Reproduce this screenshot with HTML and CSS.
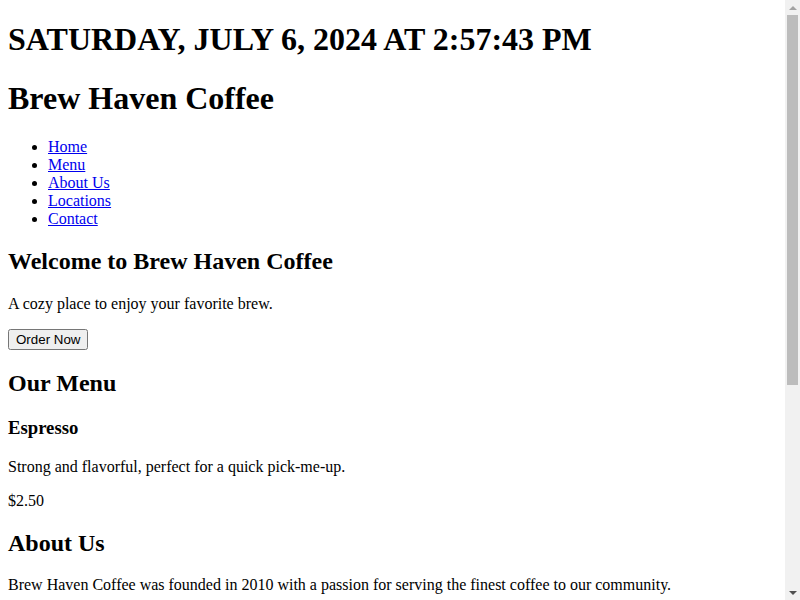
FILE: index.html
```html
<!DOCTYPE html>
<html lang="en">
<head>
<meta charset="utf-8">
<title>Brew Haven Coffee</title>
<link rel="stylesheet" href="styles.css">
</head>
<body class="page">
<header class="site-header">
  <h1 class="clock">Saturday, July 6, 2024 at 2:57:43 PM</h1>
  <h1 class="brand">Brew Haven Coffee</h1>
  <nav class="nav">
    <ul class="nav-list">
      <li><a href="#home">Home</a></li>
      <li><a href="#menu">Menu</a></li>
      <li><a href="#about">About Us</a></li>
      <li><a href="#locations">Locations</a></li>
      <li><a href="#contact">Contact</a></li>
    </ul>
  </nav>
</header>
<main class="main">
  <section class="hero" id="home">
    <h2>Welcome to Brew Haven Coffee</h2>
    <p>A cozy place to enjoy your favorite brew.</p>
    <button class="btn" type="button">Order Now</button>
  </section>
  <section class="menu" id="menu">
    <h2>Our Menu</h2>
    <div class="item">
      <h3>Espresso</h3>
      <p>Strong and flavorful, perfect for a quick pick-me-up.</p>
      <p>$2.50</p>
    </div>
  </section>
  <section class="about" id="about">
    <h2>About Us</h2>
    <p>Brew Haven Coffee was founded in 2010 with a passion for serving the finest coffee to our community.</p>
  </section>
  <section class="locations" id="locations">
    <h2>Our Locations</h2>
    <p>123 Main Street, Springfield</p>
    <p>456 Oak Avenue, Shelbyville</p>
  </section>
  <section class="contact" id="contact">
    <h2>Contact Us</h2>
    <p>Email: info@brewhaven.com</p>
    <p>Phone: (555) 123-4567</p>
  </section>
</main>
<footer class="footer">
  <p>&copy; 2024 Brew Haven Coffee. All rights reserved.</p>
  <p>Follow us on social media.</p>
</footer>
<div class="scrollbar" aria-hidden="true">
  <div class="sb-btn"><span class="sb-arrow-up"></span></div>
  <div class="sb-thumb"></div>
  <div class="sb-rest"></div>
  <div class="sb-btn"><span class="sb-arrow-down"></span></div>
</div>
</body>
</html>
```
FILE: styles.css
```css
html {
  height: 100%;
}
.page {
  font-family: "Liberation Serif", "Times New Roman", serif;
  color: #000;
  background: #fff;
  margin: 0;
  padding: 0 8px 8px;
  height: 100%;
  box-sizing: border-box;
  overflow-y: auto;
}
.clock {
  text-transform: uppercase;
}
.btn {
  font-family: "Liberation Sans", Arial, sans-serif;
  font-size: 13.333px;
}
.scrollbar {
  position: fixed;
  top: 0;
  right: 0;
  width: 15px;
  height: 100%;
  background: #f1f1f1;
  display: flex;
  flex-direction: column;
}
.sb-btn {
  height: 15px;
  flex: none;
  display: flex;
  align-items: center;
  justify-content: center;
}
.sb-arrow-up {
  width: 0;
  height: 0;
  border-left: 4px solid transparent;
  border-right: 4px solid transparent;
  border-bottom: 4px solid #a3a3a3;
}
.sb-arrow-down {
  width: 0;
  height: 0;
  border-left: 4px solid transparent;
  border-right: 4px solid transparent;
  border-top: 4px solid #505050;
}
.sb-thumb {
  height: 370px;
  flex: none;
  margin: 0 2px;
  background: #bcbcbc;
}
.sb-rest {
  flex: 1;
}
```
